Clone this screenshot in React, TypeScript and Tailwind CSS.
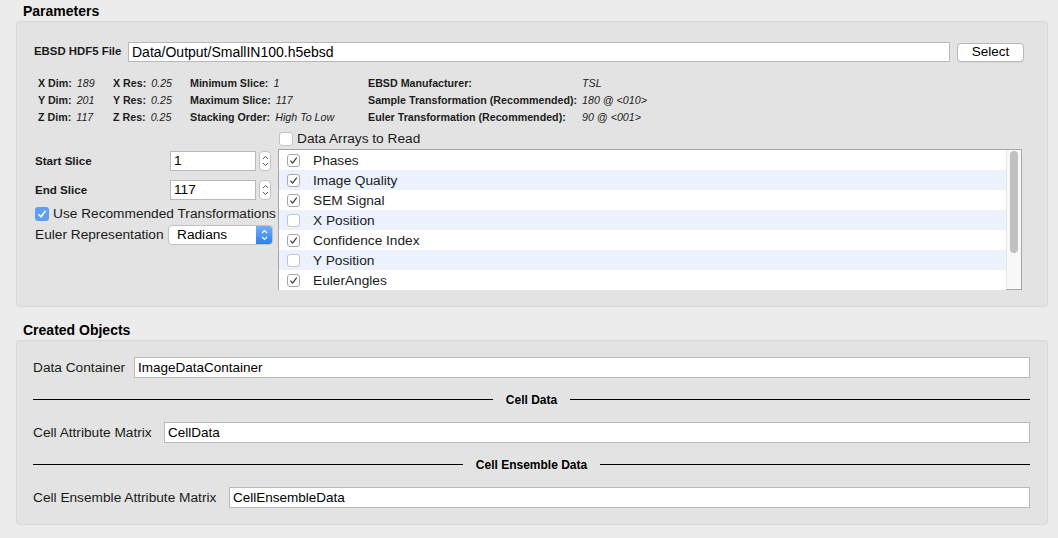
import type { ReactNode } from "react";

const font = { fontFamily: '"Liberation Sans", Arial, sans-serif' };

function Check({ on, size = 13 }: { on: boolean; size?: number }) {
    return (
        <span
            className={`flex items-center justify-center rounded-[3px] border bg-white shrink-0 ${on ? "border-[#a8a8a8]" : "border-[#c4c4c4]"}`}
            style={{ width: size, height: size }}
        >
            {on && (
                <svg width="9" height="9" viewBox="0 0 10 10">
                    <polyline points="1.5,5.2 4,7.8 8.6,1.8" fill="none" stroke="#3d3d3d" strokeWidth="1.4" />
                </svg>
            )}
        </span>
    );
}

function TextBox({ value, className }: { value: string; className: string }) {
    return (
        <div className={`flex items-center bg-white border border-[#b8b8b8] pl-[3px] text-black ${className}`}>
            {value}
        </div>
    );
}

function Spinner() {
    return (
        <div className="ml-[3px] w-[12px] h-[20px] rounded-[4px] border border-[#c2c2c2] bg-white flex flex-col items-center justify-center gap-[2px]">
            <svg width="7" height="5" viewBox="0 0 7 5">
                <polyline points="1,4 3.5,1.5 6,4" fill="none" stroke="#555" strokeWidth="1" />
            </svg>
            <svg width="7" height="5" viewBox="0 0 7 5">
                <polyline points="1,1 3.5,3.5 6,1" fill="none" stroke="#555" strokeWidth="1" />
            </svg>
        </div>
    );
}

function Info({ label, value }: { label: string; value: string }) {
    return (
        <div className="flex items-center gap-[5px] h-[17px] text-[10.7px] text-[#1c1c1c] whitespace-nowrap">
            <span className="font-bold">{label}</span>
            <span className="italic">{value}</span>
        </div>
    );
}

function Row({ children }: { children: ReactNode }) {
    return <div className="flex items-center h-[17px] text-[10.7px] text-[#1c1c1c] whitespace-nowrap">{children}</div>;
}

function Separator({ title }: { title: string }) {
    return (
        <div className="flex items-center gap-[13px] h-[20px] mt-[11px]">
            <div className="flex-1 h-px bg-black" />
            <span className="text-[12px] font-bold text-black translate-y-[1px]">{title}</span>
            <div className="flex-1 h-px bg-black" />
        </div>
    );
}

const arrays = [
    { name: "Phases", on: true },
    { name: "Image Quality", on: true },
    { name: "SEM Signal", on: true },
    { name: "X Position", on: false },
    { name: "Confidence Index", on: true },
    { name: "Y Position", on: false },
    { name: "EulerAngles", on: true },
];

export default function App() {
    return (
        <div className="w-[1058px] h-[538px] bg-[#ececec] overflow-hidden text-black" style={font}>
            {/* Parameters */}
            <div className="pl-[23px] pt-[3px] pb-[2px] leading-[16px] text-[14px] font-bold">Parameters</div>
            <div className="ml-[16px] w-[1032px] h-[286px] bg-[#e3e3e3] border border-[#d8d8d8] rounded-[4px] pt-[20px]">
                <div className="flex items-center h-[20px] pl-[17px]">
                    <span className="text-[11.4px] font-bold text-[#1a1a1a] w-[94px] whitespace-nowrap">EBSD HDF5 File</span>
                    <TextBox value="Data/Output/SmallIN100.h5ebsd" className="w-[822px] h-[20px] text-[14px]" />
                    <button className="ml-[7px] w-[67px] h-[19px] rounded-[4px] border border-[#b8b8b8] bg-white text-[13.5px] leading-none shadow-[0_1px_0_rgba(0,0,0,0.05)]">
                        Select
                    </button>
                </div>

                <div className="mt-[13px] pl-[21px] grid grid-cols-[75px_77px_178px_214px_1fr]">
                    <Info label="X Dim:" value="189" />
                    <Info label="X Res:" value="0.25" />
                    <Info label="Minimum Slice:" value="1" />
                    <Row><span className="font-bold">EBSD Manufacturer:</span></Row>
                    <Row><span className="italic">TSL</span></Row>

                    <Info label="Y Dim:" value="201" />
                    <Info label="Y Res:" value="0.25" />
                    <Info label="Maximum Slice:" value="117" />
                    <Row><span className="font-bold">Sample Transformation (Recommended):</span></Row>
                    <Row><span className="italic">180 @ &lt;010&gt;</span></Row>

                    <Info label="Z Dim:" value="117" />
                    <Info label="Z Res:" value="0.25" />
                    <Info label="Stacking Order:" value="High To Low" />
                    <Row><span className="font-bold">Euler Transformation (Recommended):</span></Row>
                    <Row><span className="italic">90 @ &lt;001&gt;</span></Row>
                </div>

                <div className="mt-[5px] flex">
                    {/* Left column */}
                    <div className="w-[261px] pl-[18px] pt-[20px]">
                        <div className="flex items-center h-[20px]">
                            <span className="w-[135px] text-[11.6px] font-bold text-[#1a1a1a]">Start Slice</span>
                            <TextBox value="1" className="w-[86px] h-[20px] text-[13.7px]" />
                            <Spinner />
                        </div>
                        <div className="flex items-center h-[20px] mt-[9px]">
                            <span className="w-[135px] text-[11.6px] font-bold text-[#1a1a1a]">End Slice</span>
                            <TextBox value="117" className="w-[86px] h-[20px] text-[13.7px]" />
                            <Spinner />
                        </div>
                        <div className="flex items-center h-[14px] mt-[7px] whitespace-nowrap">
                            <span className="w-[14px] h-[14px] rounded-[3px] bg-[#5f9ef5] flex items-center justify-center shrink-0">
                                <svg width="10" height="10" viewBox="0 0 10 10">
                                    <polyline points="1.5,5.2 4,7.8 8.6,1.8" fill="none" stroke="#fff" strokeWidth="1.5" />
                                </svg>
                            </span>
                            <span className="ml-[4px] text-[13.7px] text-[#1a1a1a]">Use Recommended Transformations</span>
                        </div>
                        <div className="flex items-center h-[20px] mt-[4px]">
                            <span className="w-[133px] text-[13.7px] text-[#1a1a1a] whitespace-nowrap">Euler Representation</span>
                            <div className="w-[105px] h-[20px] rounded-[4px] border border-[#c2c2c2] bg-white flex items-center overflow-hidden">
                                <span className="flex-1 pl-[8px] text-[13.7px]">Radians</span>
                                <span className="w-[16px] h-full bg-gradient-to-b from-[#6fb0fa] to-[#2f7cf0] flex flex-col items-center justify-center gap-[2px]">
                                    <svg width="7" height="5" viewBox="0 0 7 5">
                                        <polyline points="1,4 3.5,1.5 6,4" fill="none" stroke="#fff" strokeWidth="1.2" />
                                    </svg>
                                    <svg width="7" height="5" viewBox="0 0 7 5">
                                        <polyline points="1,1 3.5,3.5 6,1" fill="none" stroke="#fff" strokeWidth="1.2" />
                                    </svg>
                                </span>
                            </div>
                        </div>
                    </div>

                    {/* Right column */}
                    <div className="w-[744px]">
                        <div className="flex items-center h-[16px] pl-[1px]">
                            <Check on={false} size={14} />
                            <span className="ml-[4px] text-[13.7px] text-[#1a1a1a]">Data Arrays to Read</span>
                        </div>
                        <div className="mt-[2px] h-[141px] border border-[#a5a5a5] bg-white flex">
                            <div className="flex-1">
                                {arrays.map((a, i) => (
                                    <div
                                        key={a.name}
                                        className={`flex items-center h-[20px] pl-[8px] ${i % 2 === 1 ? "bg-[#ebf2fd]" : "bg-white"}`}
                                    >
                                        <Check on={a.on} />
                                        <span className="ml-[13px] text-[13.7px] text-[#1a1a1a] translate-y-[1px]">{a.name}</span>
                                    </div>
                                ))}
                            </div>
                            <div className="w-[15px] bg-[#f8f8f8] border-l border-[#e6e6e6] flex justify-center pt-[1px]">
                                <div className="w-[8px] h-[102px] rounded-full bg-[#c1c1c1]" />
                            </div>
                        </div>
                    </div>
                </div>
            </div>

            {/* Created Objects */}
            <div className="pl-[23px] pt-[15px] pb-[2px] leading-[16px] text-[14px] font-bold">Created Objects</div>
            <div className="ml-[16px] w-[1032px] h-[185px] bg-[#e3e3e3] border border-[#d8d8d8] rounded-[4px] pt-[16px] pl-[16px] pr-[17px]">
                <div className="flex items-center h-[21px]">
                    <span className="w-[101px] text-[13.7px] text-[#1a1a1a] whitespace-nowrap translate-y-[1px]">Data Container</span>
                    <TextBox value="ImageDataContainer" className="flex-1 h-[21px] text-[13.5px] pt-[1px]" />
                </div>
                <Separator title="Cell Data" />
                <div className="flex items-center h-[21px] mt-[13px]">
                    <span className="w-[131px] text-[13.7px] text-[#1a1a1a] whitespace-nowrap translate-y-[1px]">Cell Attribute Matrix</span>
                    <TextBox value="CellData" className="flex-1 h-[21px] text-[13.5px] pt-[1px]" />
                </div>
                <Separator title="Cell Ensemble Data" />
                <div className="flex items-center h-[21px] mt-[13px]">
                    <span className="w-[196px] text-[13.7px] text-[#1a1a1a] whitespace-nowrap translate-y-[1px]">Cell Ensemble Attribute Matrix</span>
                    <TextBox value="CellEnsembleData" className="flex-1 h-[21px] text-[13.5px] pt-[1px]" />
                </div>
            </div>
        </div>
    );
}
